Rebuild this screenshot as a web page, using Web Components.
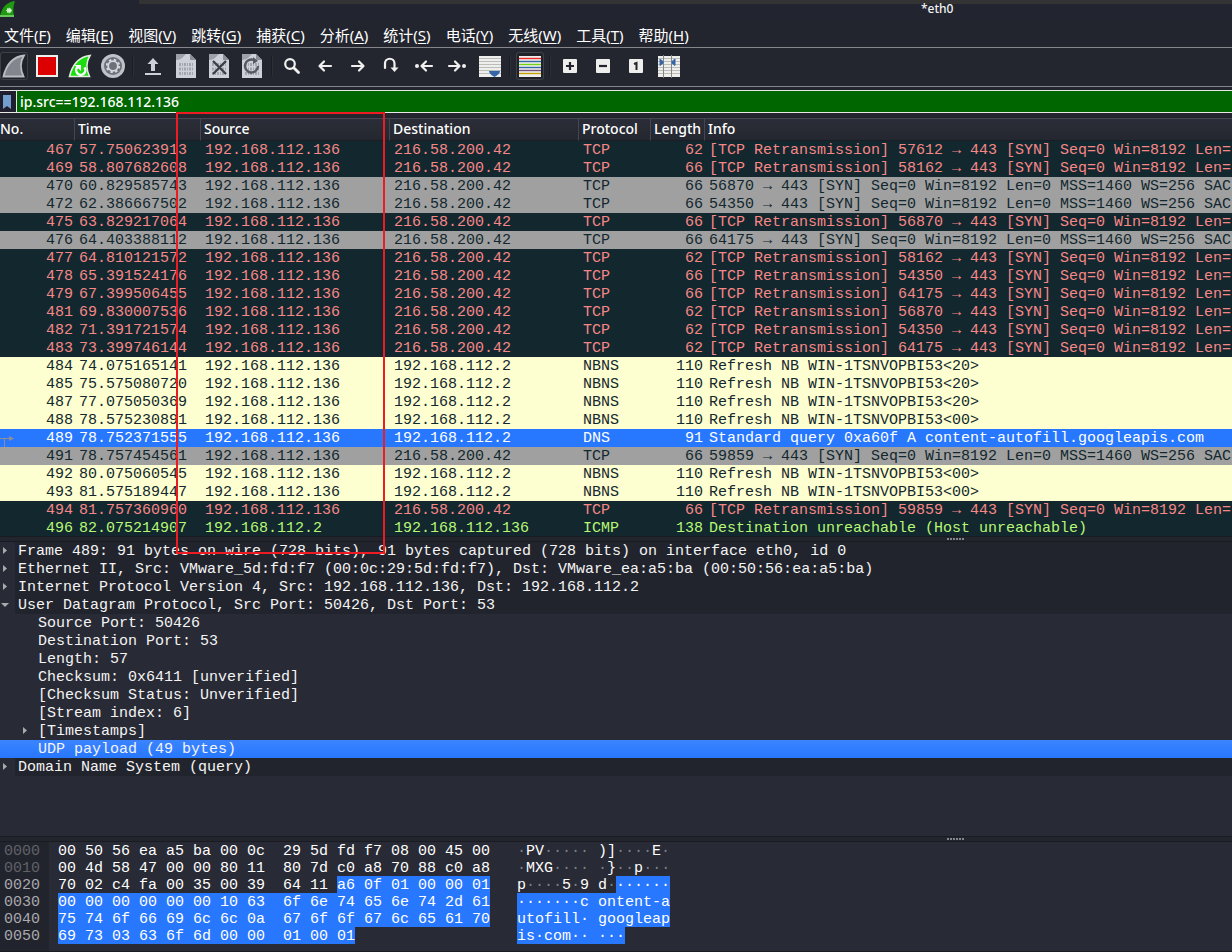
<!DOCTYPE html>
<html lang="zh-CN">
<head>
<meta charset="utf-8">
<title>*eth0</title>
<style>
html, body { margin: 0; height: 100%; background: #23252e; }
body { overflow: hidden; }
</style>
</head>
<body>
<ws-app>
  <ws-titlebar slot="title">*eth0</ws-titlebar>
  <ws-menubar slot="menu"></ws-menubar>
  <ws-toolbar slot="tools"></ws-toolbar>
  <ws-filter slot="filter"></ws-filter>
  <ws-packets slot="packets"></ws-packets>
  <ws-splitter slot="split1"></ws-splitter>
  <ws-details slot="details"></ws-details>
  <ws-splitter slot="split2"></ws-splitter>
  <ws-bytes slot="bytes"></ws-bytes>
</ws-app>

<script>
const define = (name, html, setup) => customElements.define(name, class extends HTMLElement {
  constructor() {
    super();
    const root = this.attachShadow({ mode: 'open' });
    root.innerHTML = html;
    if (setup) setup(root, this);
  }
});
const esc = s => s.replace(/&/g, '&amp;').replace(/</g, '&lt;').replace(/>/g, '&gt;');

/* ---------- icons ---------- */
const fin = 'M1.5 22.5C4 12 9 3 22 1.5C18 8 18 15 21.5 22.5Z';
const doc = '<path d="M2 1H16L22 7V25H2Z" fill="#cdd0d8"/><path d="M2 1H12L8 5Q6 7 2 7Z" fill="#9da1ab"/><path d="M16 1V7H22Z" fill="#8b8f99"/>' +
  '<path d="M5 11.5H20M5 16H20M5 20.5H20" stroke="#a2a5ae" stroke-width="3" stroke-dasharray="2 1 1 1"/>';
const lines = '<rect x="1" y="2" width="22" height="21" fill="#eeeeec"/>';
const stripes = c => c.map((k, i) => `<path d="M1 ${4 + i * 3}.5H23" stroke="${k}"/>`).join('');
const svg = (w, h, body) => `<svg width="${w}" height="${h}" viewBox="0 0 ${w} ${h}" fill="none" aria-hidden="true">${body}</svg>`;
const stroke = d => `<path d="${d}" stroke="#f0f0ee" stroke-width="2.2" stroke-linecap="round" stroke-linejoin="round"/>`;
const ICONS = {
  fin: svg(24, 24, `<path d="${fin}" fill="#83868f" stroke="#b9bcc3" stroke-width="1.8"/>`),
  stop: svg(24, 24, '<rect x="1" y="1" width="22" height="22" fill="#eeeeec"/><rect x="3" y="3" width="18" height="18" fill="#dd0000"/>'),
  restart: svg(24, 24, `<path d="${fin}" fill="#1bdd10" stroke="#dfeedd" stroke-width="1.6"/><path d="M16.5 13.5a4.6 4.6 0 1 1-7-.5" stroke="#fff" stroke-width="2.4"/><path d="M6.5 11h6.500v6Z" fill="#fff"/>`),
  gear: svg(24, 24, '<circle cx="12" cy="12" r="12" fill="#bfc2ca"/><circle cx="12" cy="12" r="9" fill="#6c7079"/><circle cx="12" cy="12" r="6.200" stroke="#d5d7dc" stroke-width="2" stroke-dasharray="2.400 2.470"/><circle cx="12" cy="12" r="4.800" stroke="#d5d7dc" stroke-width="1.800"/>'),
  open: svg(24, 24, '<path d="M12 4L17.500 10H14V17H10V10H6.500Z" fill="#cdd0d8"/><path d="M4 19H20V21H4Z" fill="#cdd0d8"/>'),
  save: svg(24, 26, doc),
  close: svg(24, 26, doc + '<path d="M6 8L19 21M19 8L6 21" stroke="#3c3f47" stroke-width="2.400"/>'),
  reload: svg(24, 26, doc + '<path d="M18 13a6.500 6.500 0 1 1-4-6" stroke="#555962" stroke-width="2.400"/><path d="M13 4L18 8L13 11Z" fill="#555962"/>'),
  find: svg(24, 24, '<circle cx="10" cy="10" r="4.800" stroke="#f0f0ee" stroke-width="2.200"/><path d="M14 14L18.500 18.500" stroke="#f0f0ee" stroke-width="2.800" stroke-linecap="round"/>'),
  back: svg(24, 24, stroke('M18 12H7M11 7.500L6.500 12L11 16.500')),
  forward: svg(24, 24, stroke('M6 12H17M13 7.500L17.500 12L13 16.500')),
  jump: svg(24, 24, stroke('M6 14V9.500a4.500 4.500 0 0 1 9.500 0V14') + '<path d="M11.500 13.500H19.500L15.500 18Z" fill="#f0f0ee"/>'),
  first: svg(24, 24, stroke('M20 12H10M14 7.500L9.500 12L14 16.500') + '<circle cx="5" cy="12" r="2" fill="#f0f0ee"/>'),
  last: svg(24, 24, stroke('M4 12H14M10 7.500L14.500 12L10 16.500') + '<circle cx="19" cy="12" r="2" fill="#f0f0ee"/>'),
  scroll: svg(24, 24, lines + stripes(['#bcbcb8', '#bcbcb8', '#bcbcb8', '#bcbcb8', '#bcbcb8', '#bcbcb8']) + '<path d="M11 17H22Q22 20 16.500 23Q11 20 11 17Z" fill="#3567a8"/>'),
  colors: svg(24, 24, lines + '<g stroke-width="1.400">' + stripes(['#ef2929', '#3465a4', '#73d216', '#3465a4', '#75507b', '#c4a000']) + '</g>'),
  plus: svg(24, 24, '<rect x="5" y="5" width="14" height="14" rx="1" fill="#eeeeec"/><path d="M12 8V16M8 12H16" stroke="#23252e" stroke-width="2.200"/>'),
  minus: svg(24, 24, '<rect x="5" y="5" width="14" height="14" rx="1" fill="#eeeeec"/><path d="M8 12H16" stroke="#23252e" stroke-width="2.200"/>'),
  one: svg(24, 24, '<rect x="5" y="5" width="14" height="14" rx="1" fill="#eeeeec"/><path d="M10 10L12.500 9V16" stroke="#23252e" stroke-width="2"/>'),
  resize: svg(24, 24, lines + stripes(['#bcbcb8', '#bcbcb8', '#bcbcb8', '#bcbcb8', '#bcbcb8', '#bcbcb8']) + '<path d="M6.500 1V24M14.500 1V24" stroke="#85857f"/><path d="M3 5L6 7.500V9L3 11.500ZM18 5L15 7.500V9L18 11.500Z" fill="#3567a8" stroke="#3567a8"/>')
};

/* ---------- shell ---------- */
define('ws-app', `
<style>
:host { display: flex; flex-direction: column; position: relative; height: 100%; min-height: 100vh;
  font: 15px/20px "Noto Sans", "Noto Sans CJK SC", sans-serif; color: #f4f4f4; background: #23252e;
  --mono: "Liberation Mono", monospace; }
slot[name=details]::slotted(*) { flex: 1; }
.mark { position: absolute; left: 176px; top: 112px; width: 205px; height: 438px; border: 2px solid #ec1c24; pointer-events: none; }
</style>
<slot name="title"></slot><slot name="menu"></slot><slot name="tools"></slot><slot name="filter"></slot>
<slot name="packets"></slot><slot name="split1"></slot><slot name="details"></slot><slot name="split2"></slot><slot name="bytes"></slot>
<div class="mark"></div>`);

define('ws-titlebar', `
<style>
:host { display: grid; grid-template-columns: 139px 1fr; height: 22px; background: #22252f; }
svg { display: block; margin-top: 1px; }
.strip { height: 4px; background: #333; }
.row { display: flex; font-size: 12px; line-height: 10px; font-weight: 500; }
.row::before { content: ""; flex: 782 1 0; }
.row span { flex: 311 1 0; white-space: nowrap; }
</style>
${svg(16, 16, '<path d="M0 15C2 6 7 1 15 0C13 5 13 10 14 15Z" fill="#1f9a10"/><path d="M0 15H14" stroke="#69c65b" stroke-width="2"/><circle cx="9" cy="9.500" r="2.300" fill="#c5efc0" stroke="#e8ffe4" stroke-dasharray="1 1"/>')}
<div><div class="strip"></div><div class="row"><span><slot></slot></span></div></div>`);

define('ws-menubar', `
<style>
:host { display: block; border-bottom: 1px solid #85868b; }
nav { display: flex; gap: 15px; padding: 0 4px; height: 25px; }
button { all: unset; font: inherit; line-height: 20px; color: #fff; white-space: nowrap; }
u { text-underline-offset: 2px; }
</style><nav></nav>`, root => {
  root.querySelector('nav').innerHTML = ['文件F', '编辑E', '视图V', '跳转G', '捕获C', '分析A', '统计S', '电话Y', '无线W', '工具T', '帮助H']
    .map(m => `<button type="button">${m.slice(0, 2)}(<u>${m[2]}</u>)</button>`).join('');
});

define('ws-tool', `
<style>
:host { display: block; flex: none; }
button { all: unset; box-sizing: border-box; display: flex; align-items: center; justify-content: center; width: 28px; height: 28px; border-radius: 3px; }
:host([framed]) button { box-shadow: inset 0 0 0 1px #3d4049; background: #20222a; }
</style><button type="button"></button>`, (root, el) => {
  const b = root.querySelector('button');
  b.innerHTML = ICONS[el.getAttribute('icon')];
  b.setAttribute('aria-label', el.getAttribute('icon'));
});

define('ws-toolbar', `
<style>
:host { display: flex; gap: 5px; height: 34px; padding-top: 4px; border-bottom: 1px solid #85868b; background: #23262f; }
i { width: 2px; height: 20px; margin-top: 4px; flex: none; background: linear-gradient(90deg, #1b1d24 1px, #2c2f38 1px); }
</style>`, root => {
  root.innerHTML += ['fin*', 'stop', 'restart', 'gear', '|', 'open', 'save', 'close', 'reload', '|', 'find', 'back', 'forward', 'jump', 'first', 'last', 'scroll', '|', 'colors*', '|', 'plus', 'minus', 'one', 'resize']
    .map(n => n === '|' ? '<i></i>' : `<ws-tool icon="${n.replace('*', '')}"${n.endsWith('*') ? ' framed' : ''}></ws-tool>`).join('');
});

define('ws-filter', `
<style>
:host { display: flex; margin: 3px 0 5px; height: 21px; border: solid #e8e8e8; border-width: 1px 0; }
button { all: unset; width: 16px; display: flex; align-items: center; background: #201f30; border-right: 1px solid #e8e8e8; }
input { all: unset; flex: 1; min-width: 0; padding-left: 3px; background: #006600; color: #fff; font: inherit; font-size: 14px; font-weight: 500; line-height: 21px; }
</style>
<button type="button" aria-label="bookmark">${svg(14, 16, '<path d="M3 1H11V15L7 12L3 15Z" fill="#729fcf"/>')}</button>
<input type="text" aria-label="filter" value="ip.src==192.168.112.136" spellcheck="false">`);

/* ---------- packet list ---------- */
const RE = (a) => `[TCP Retransmission] ${a} → 443 [SYN] Seq=0 Win=8192 Len=`;
const SYN = (a) => `${a} → 443 [SYN] Seq=0 Win=8192 Len=0 MSS=1460 WS=256 SAC`;
const NB = (a) => `Refresh NB WIN-1TSNVOPBI53<${a}>`;
const G = '216.58.200.42', L = '192.168.112.2', S = '192.168.112.136';
const PACKETS = [
  ['bad', 467, '57.750623913', S, G, 'TCP', 62, RE(57612)], ['bad', 469, '58.807682608', S, G, 'TCP', 66, RE(58162)],
  ['syn', 470, '60.829585743', S, G, 'TCP', 66, SYN(56870)], ['syn', 472, '62.386667502', S, G, 'TCP', 66, SYN(54350)],
  ['bad', 475, '63.829217064', S, G, 'TCP', 66, RE(56870)], ['syn', 476, '64.403388112', S, G, 'TCP', 66, SYN(64175)],
  ['bad', 477, '64.810121572', S, G, 'TCP', 62, RE(58162)], ['bad', 478, '65.391524176', S, G, 'TCP', 66, RE(54350)],
  ['bad', 479, '67.399506455', S, G, 'TCP', 66, RE(64175)], ['bad', 481, '69.830007536', S, G, 'TCP', 62, RE(56870)],
  ['bad', 482, '71.391721574', S, G, 'TCP', 62, RE(54350)], ['bad', 483, '73.399746144', S, G, 'TCP', 62, RE(64175)],
  ['nb', 484, '74.075165141', S, L, 'NBNS', 110, NB('20')], ['nb', 485, '75.575080720', S, L, 'NBNS', 110, NB('20')],
  ['nb', 487, '77.075050369', S, L, 'NBNS', 110, NB('20')], ['nb', 488, '78.575230891', S, L, 'NBNS', 110, NB('00')],
  ['sel', 489, '78.752371555', S, L, 'DNS', 91, 'Standard query 0xa60f A content-autofill.googleapis.com'],
  ['syn', 491, '78.757454561', S, G, 'TCP', 66, SYN(59859)],
  ['nb', 492, '80.075060545', S, L, 'NBNS', 110, NB('00')], ['nb', 493, '81.575189447', S, L, 'NBNS', 110, NB('00')],
  ['bad', 494, '81.757360960', S, G, 'TCP', 66, RE(59859)],
  ['icmp', 496, '82.075214907', L, S, 'ICMP', 138, 'Destination unreachable (Host unreachable)']
];
define('ws-packets', `
<style>
:host { display: block; height: 418px; overflow: hidden; }
table { width: 100%; table-layout: fixed; border-collapse: separate; border-spacing: 0; font: 15px/16px var(--mono); }
th, td { padding: 2px 0 0 4px; text-align: left; white-space: nowrap; overflow: hidden; }
th { box-sizing: border-box; height: 23px; padding: 0 0 1px 3px; font: 500 14px/20px "Noto Sans", sans-serif; color: #fff;
  background: linear-gradient(#2b2e38, #24272f); border-top: 1px solid #44474f; border-bottom: 1px solid #1b1d24; border-right: 1px solid #44474f; }
th:first-child { padding-left: 0; }
th:last-child { border-right: 0; }
td.r { text-align: right; padding: 2px 2px 0 0; }
td svg { float: left; margin: -2px 0 0; }
.bad td { background: #12272e; color: #f78787; }
.syn td { background: #a0a0a0; color: #12272e; }
.nb td { background: #feffd0; color: #12272e; }
.sel td { background: #2777ff; color: #fff; }
.icmp td { background: #12272e; color: #b7f774; }
.w0 { width: 75px; } .w1 { width: 126px; } .w2 { width: 189px; } .w4 { width: 72px; } .w5 { width: 54px; }
</style>
<table><colgroup><col class="w0"><col class="w1"><col class="w2"><col class="w2"><col class="w4"><col class="w5"><col></colgroup>
<thead><tr><th>No.</th><th>Time</th><th>Source</th><th>Destination</th><th>Protocol</th><th>Length</th><th>Info</th></tr></thead><tbody></tbody></table>`, root => {
  const mark = svg(14, 18, '<path d="M0 9.500H10M4.500 9.500V18" stroke="#8d8f94"/><path d="M9 7V12L14 9.500Z" fill="#8d8f94"/>');
  root.querySelector('tbody').innerHTML = PACKETS.map(([c, ...v]) => `<tr class="${c}">` + v.map((x, i) =>
    `<td${i === 0 || i === 5 ? ' class="r"' : ''}>${c === 'sel' && i === 0 ? mark : ''}${esc(String(x))}</td>`).join('') + '</tr>').join('');
});

define('ws-splitter', `
<style>
:host { display: flex; box-sizing: border-box; height: 6px; padding-top: 1px; border: solid #1a1b21; border-width: 1px 0; background: #23252e; flex: none; }
:host::before { content: ""; flex: 947 1 0; }
div { flex: 285 1 0; }
i { display: block; width: 17px; height: 2px; background: repeating-linear-gradient(90deg, #85868b 0 2px, #23252e 2px 3px); }
</style><div><i></i></div>`);

/* ---------- protocol tree ---------- */
const TREE = [
  [0, '>', 'Frame 489: 91 bytes on wire (728 bits), 91 bytes captured (728 bits) on interface eth0, id 0'],
  [0, '>', 'Ethernet II, Src: VMware_5d:fd:f7 (00:0c:29:5d:fd:f7), Dst: VMware_ea:a5:ba (00:50:56:ea:a5:ba)'],
  [0, '>', 'Internet Protocol Version 4, Src: 192.168.112.136, Dst: 192.168.112.2'],
  [0, 'v', 'User Datagram Protocol, Src Port: 50426, Dst Port: 53'],
  [1, '', 'Source Port: 50426'], [1, '', 'Destination Port: 53'], [1, '', 'Length: 57'],
  [1, '', 'Checksum: 0x6411 [unverified]'], [1, '', '[Checksum Status: Unverified]'], [1, '', '[Stream index: 6]'],
  [1, '>', '[Timestamps]'], [1, 'sel', 'UDP payload (49 bytes)'], [0, '>', 'Domain Name System (query)']
];
define('ws-details', `
<style>
:host { display: block; background: #282a35; overflow: hidden; }
ul { list-style: none; margin: 0; padding: 0; font: 15px/20px var(--mono); }
li { display: flex; height: 18px; white-space: pre; }
li.in { padding-left: 20px; }
svg { flex: none; width: 15px; height: 18px; }
span { flex: 1; padding-left: 3px; }
.top span { background: #22242d; }
.sel { background: linear-gradient(#3b84ff, #2777ff); }
</style><ul></ul>`, root => {
  const arrow = { '>': '<path d="M3 5V12L7 8.500Z" fill="#a9aaae"/>', 'v': '<path d="M1 7H9L5 11Z" fill="#a9aaae"/>' };
  root.querySelector('ul').innerHTML = TREE.map(([d, k, t]) =>
    `<li class="${d ? 'in' : 'top'} ${k === 'sel' ? 'sel' : ''}">${svg(15, 18, arrow[k] || '')}<span>${t}</span></li>`).join('');
});

/* ---------- packet bytes: offset, hex, ascii, first highlighted column of each ---------- */
const BYTES = [
  ['0000', '00 50 56 ea a5 ba 00 0c  29 5d fd f7 08 00 45 00', '·PV····· )]····E·', 48, 17],
  ['0010', '00 4d 58 47 00 00 80 11  80 7d c0 a8 70 88 c0 a8', '·MXG···· ·}··p···', 48, 17],
  ['0020', '70 02 c4 fa 00 35 00 39  64 11 a6 0f 01 00 00 01', 'p····5·9 d·······', 31, 11],
  ['0030', '00 00 00 00 00 00 10 63  6f 6e 74 65 6e 74 2d 61', '·······c ontent-a', 0, 0],
  ['0040', '75 74 6f 66 69 6c 6c 0a  67 6f 6f 67 6c 65 61 70', 'utofill· googleap', 0, 0],
  ['0050', '69 73 03 63 6f 6d 00 00  01 00 01', 'is·com·· ···', 0, 0]
];
define('ws-bytes', `
<style>
:host { display: block; background: linear-gradient(90deg, #22242d 49px, #282a35 49px); padding-bottom: 7px; border-bottom: 1px solid #1a1b21; }
.line { display: grid; grid-template-columns: 54px 459px 1fr; padding-left: 4px; height: 17px; font: 15px/19px var(--mono); white-space: pre; color: #fff; }
.off { color: #a9aaad; }
.dim { color: #606268; }
b { font-weight: 400; display: inline-block; height: 17px; background: #2777ff; }
s { text-decoration: none; color: #7c7e84; }
</style>`, root => {
  const part = (t, n) => t.slice(0, n).replace(/·+/g, '<s>$&</s>') + (n < t.length ? `<b>${t.slice(n)}</b>` : '');
  root.innerHTML += BYTES.map(([o, h, a, x, y], i) =>
    `<div class="line"><span class="${i < 2 ? 'dim' : 'off'}">${o}</span><span>${part(h, x)}</span><span>${part(a, y)}</span></div>`).join('');
});
</script>
</body>
</html>
